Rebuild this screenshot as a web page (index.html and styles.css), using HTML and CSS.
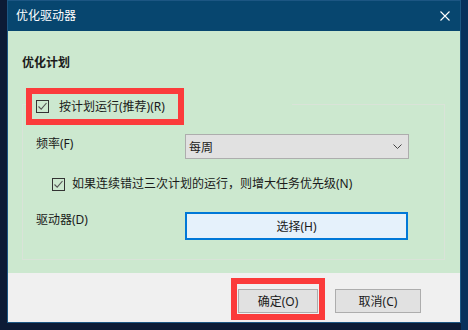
FILE: index.html
```html
<!DOCTYPE html>
<html lang="zh-CN">
<head>
    <meta charset="UTF-8">
    <title>优化驱动器</title>
    <link rel="stylesheet" href="styles.css">
</head>
<body>
    <div class="window">
        <div class="titlebar">
            <span class="title">优化驱动器</span>
            <svg class="close" width="10" height="10" viewBox="0 0 10 10">
                <path d="M0.5 0.5 L9.5 9.5 M9.5 0.5 L0.5 9.5" stroke="#ffffff" stroke-width="1.1" fill="none"/>
            </svg>
        </div>

        <div class="content">
            <h3 class="heading">优化计划</h3>

            <div class="group">
                <div class="group-title">
                    <div class="mark mark-run">
                        <label class="check">
                            <span class="box">
                                <svg width="11" height="11" viewBox="0 0 11 11"><path d="M1.5 5.5 L4.2 8.2 L9.5 2" stroke="#555" stroke-width="1.1" fill="none"/></svg>
                            </span>
                            按计划运行(推荐)(R)
                        </label>
                    </div>
                </div>

                <div class="row row-freq">
                    <span class="label">频率(F)</span>
                    <div class="select">
                        <span>每周</span>
                        <svg width="9" height="5" viewBox="0 0 9 5"><path d="M0.5 0.5 L4.5 4.5 L8.5 0.5" stroke="#444" stroke-width="1" fill="none"/></svg>
                    </div>
                </div>

                <div class="row row-missed">
                    <label class="check">
                        <span class="box">
                            <svg width="11" height="11" viewBox="0 0 11 11"><path d="M1.5 5.5 L4.2 8.2 L9.5 2" stroke="#555" stroke-width="1.1" fill="none"/></svg>
                        </span>
                        如果连续错过三次计划的运行，则增大任务优先级(N)
                    </label>
                </div>

                <div class="row row-drive">
                    <span class="label">驱动器(D)</span>
                    <button class="btn-choose">选择(H)</button>
                </div>
            </div>
        </div>

        <div class="footer">
            <div class="mark mark-ok">
                <button class="btn">确定(O)</button>
            </div>
            <button class="btn btn-cancel">取消(C)</button>
        </div>
    </div>
</body>
</html>
```

FILE: styles.css
```css
* {
    margin: 0;
    padding: 0;
    box-sizing: border-box;
}

body {
    font-family: 'Noto Sans', 'Noto Sans CJK SC', sans-serif;
    font-size: 12px;
    color: #1a1a1a;
    background: linear-gradient(to right, #0c1b36 0, #0c1b36 461px, #08305c 461px);
    height: 330px;
    overflow: hidden;
}

.window {
    margin-left: 7px;
    width: 454px;
    height: 323px;
    border: 1px solid #1c5683;
    display: flex;
    flex-direction: column;
}

.titlebar {
    height: 30px;
    background-color: #07466f;
    display: flex;
    align-items: center;
    justify-content: space-between;
    padding: 0 10px 0 8px;
    color: #ffffff;
}

.title {
    font-size: 12px;
    line-height: 16px;
}

.close {
    display: block;
}

.content {
    height: 242px;
    background-color: #cce8cf;
    padding: 24px 0 0 14px;
}

.heading {
    font-size: 12px;
    font-weight: bold;
    line-height: 16px;
    margin-bottom: 33px;
}

.group {
    width: 423px;
    height: 156px;
    border: 1px solid #d9e3d8;
}

.group-title {
    margin: -17px 0 0 3px;
    width: 266px;
    background-color: #cce8cf;
}

.mark {
    border: 6px solid #fb3b3b;
}

.mark-run {
    width: 158px;
    height: 37px;
    display: flex;
    align-items: center;
    padding: 0 0 0 4px;
}

.check {
    display: flex;
    align-items: center;
    line-height: 16px;
}

.box {
    width: 13px;
    height: 13px;
    border: 1px solid #333333;
    display: flex;
    align-items: center;
    justify-content: center;
    margin-right: 10px;
}

.box svg {
    display: block;
}

.row {
    display: flex;
    margin-left: 13px;
    align-items: flex-start;
}

.label {
    width: 149px;
    line-height: 16px;
}

.row-freq {
    margin-top: 9px;
}

.row-freq .label {
    margin-top: 2px;
}

.select {
    width: 224px;
    height: 25px;
    background-color: #e1e1e1;
    border: 1px solid #adadad;
    display: flex;
    align-items: center;
    justify-content: space-between;
    padding: 0 6px 0 3px;
}

.row-missed {
    margin: 15px 0 0 29px;
    height: 20px;
    align-items: center;
}

.row-missed .box {
    margin-right: 7px;
}

.row-drive {
    margin-top: 18px;
}

.row-drive .label {
    margin-top: 0;
}

.btn-choose {
    width: 223px;
    height: 28px;
    background-color: #e5f1fb;
    border: 1px solid #0078d7;
    box-shadow: inset 0 0 0 1px #0078d7;
    font: inherit;
    color: #1a1a1a;
}

.footer {
    flex: 1;
    background-color: #f0f0f0;
    display: flex;
    justify-content: flex-end;
    align-items: flex-start;
    padding: 5px 39px 0 0;
}

.mark-ok {
    padding: 5px 1px 1px 1px;
}

.btn {
    width: 80px;
    height: 24px;
    background-color: #e1e1e1;
    border: 1px solid #adadad;
    font: inherit;
    color: #1a1a1a;
}

.btn-cancel {
    width: 86px;
    margin: 11px 0 0 10px;
}
```
